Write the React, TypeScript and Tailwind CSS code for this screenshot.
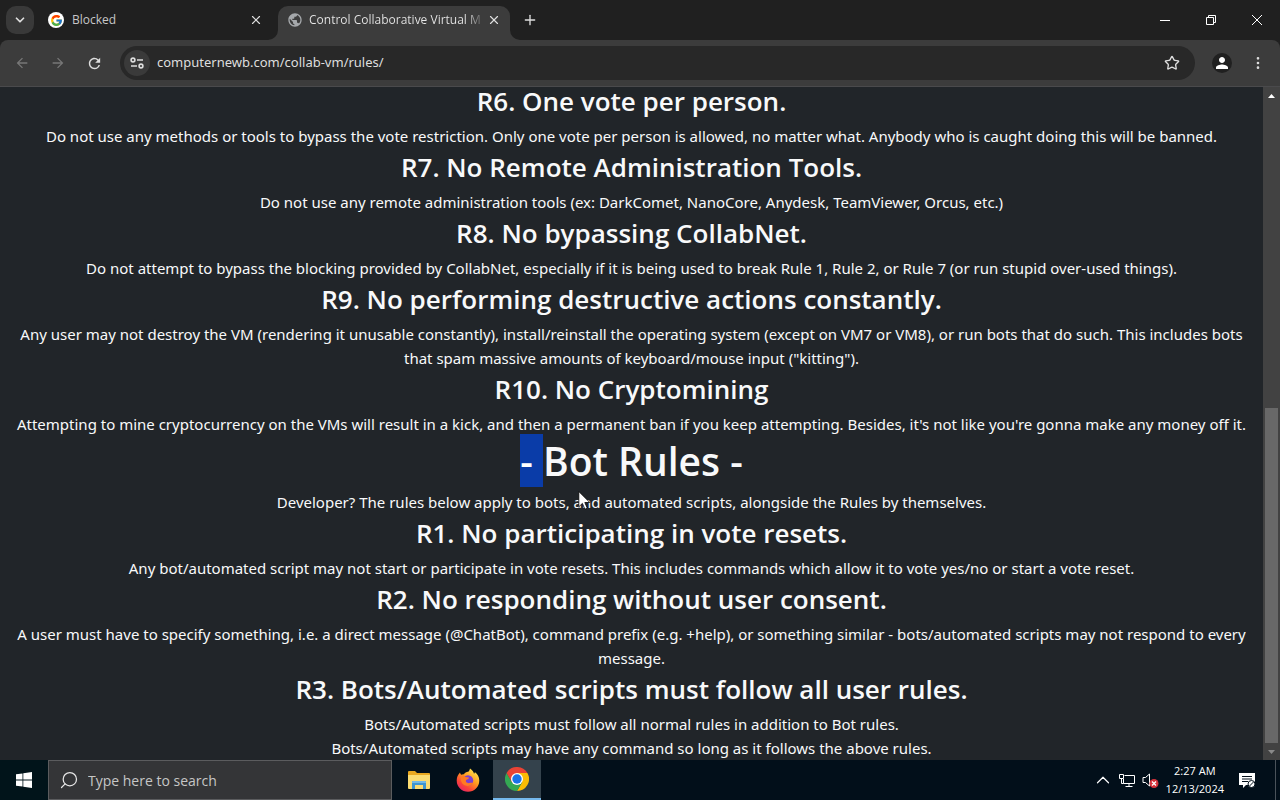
import type { ReactNode } from "react";
import {
  ChevronDown,
  ChevronUp,
  EllipsisVertical,
  Plus,
  Search,
  Star,
  X,
} from "lucide-react";
import { FcGoogle } from "react-icons/fc";
import {
  MdArrowBack,
  MdArrowForward,
  MdPerson,
  MdPublic,
  MdRefresh,
} from "react-icons/md";

interface Rule {
  title: string;
  body: ReactNode;
}

const userRules: Rule[] = [
  {
    title: "R6. One vote per person.",
    body: "Do not use any methods or tools to bypass the vote restriction. Only one vote per person is allowed, no matter what. Anybody who is caught doing this will be banned.",
  },
  {
    title: "R7. No Remote Administration Tools.",
    body: "Do not use any remote administration tools (ex: DarkComet, NanoCore, Anydesk, TeamViewer, Orcus, etc.)",
  },
  {
    title: "R8. No bypassing CollabNet.",
    body: "Do not attempt to bypass the blocking provided by CollabNet, especially if it is being used to break Rule 1, Rule 2, or Rule 7 (or run stupid over-used things).",
  },
  {
    title: "R9. No performing destructive actions constantly.",
    body: 'Any user may not destroy the VM (rendering it unusable constantly), install/reinstall the operating system (except on VM7 or VM8), or run bots that do such. This includes bots that spam massive amounts of keyboard/mouse input ("kitting").',
  },
  {
    title: "R10. No Cryptomining",
    body: "Attempting to mine cryptocurrency on the VMs will result in a kick, and then a permanent ban if you keep attempting. Besides, it's not like you're gonna make any money off it.",
  },
];

const botRules: Rule[] = [
  {
    title: "R1. No participating in vote resets.",
    body: "Any bot/automated script may not start or participate in vote resets. This includes commands which allow it to vote yes/no or start a vote reset.",
  },
  {
    title: "R2. No responding without user consent.",
    body: "A user must have to specify something, i.e. a direct message (@ChatBot), command prefix (e.g. +help), or something similar - bots/automated scripts may not respond to every message.",
  },
  {
    title: "R3. Bots/Automated scripts must follow all user rules.",
    body: (
      <>
        Bots/Automated scripts must follow all normal rules in addition to Bot
        rules.
        <br />
        Bots/Automated scripts may have any command so long as it follows the
        above rules.
      </>
    ),
  },
];

function RuleText({ children }: { children: ReactNode }) {
  return (
    <p className="pb-[5px] font-['Noto_Sans',sans-serif] text-[15px] leading-6">
      {children}
    </p>
  );
}

function RuleItem({ title, body }: Rule) {
  return (
    <section>
      <h3 className="mb-[9px] text-[26px] leading-7 font-semibold">{title}</h3>
      <RuleText>{body}</RuleText>
    </section>
  );
}

function TabStrip() {
  return (
    <div className="flex h-10 items-center bg-[#202020] text-[#dedede]">
      <button
        aria-label="Search tabs"
        className="ml-[6px] flex size-7 shrink-0 items-center justify-center rounded-[10px] bg-[#393939]"
      >
        <ChevronDown size={14} strokeWidth={3} />
      </button>

      <div className="ml-[14px] flex w-[220px] shrink-0 items-center">
        <span className="flex size-4 items-center justify-center rounded-full bg-white">
          <FcGoogle size={13} />
        </span>
        <span className="ml-2 flex-1 text-[12px] text-[#c7c7c7]">Blocked</span>
        <button aria-label="Close tab" className="mr-[5px]">
          <X size={14} strokeWidth={2} />
        </button>
      </div>

      {/* Active tab */}
      <div className="flex h-full shrink-0 items-end">
        <svg width="10" height="10" viewBox="0 0 10 10" className="fill-[#3c3c3c]">
          <path d="M10 0v10H0A10 10 0 0 0 10 0z" />
        </svg>
        <div className="flex h-[34px] w-[232px] items-center rounded-t-[10px] bg-[#3c3c3c] px-[9px] pb-[6px]">
          <MdPublic size={16} className="shrink-0 text-[#a5a8ab]" />
          <span className="ml-[6px] flex-1 bg-gradient-to-r from-[#e8e8e8] from-90% to-[#555] bg-clip-text text-[12px] whitespace-nowrap text-transparent">
            Control Collaborative Virtual M
          </span>
          <button aria-label="Close tab" className="ml-1 shrink-0">
            <X size={14} strokeWidth={2} />
          </button>
        </div>
        <svg width="10" height="10" viewBox="0 0 10 10" className="fill-[#3c3c3c]">
          <path d="M0 0v10h10A10 10 0 0 1 0 0z" />
        </svg>
      </div>
      <button aria-label="New tab" className="ml-[2px]">
        <Plus size={16} strokeWidth={2} />
      </button>

      <div className="ml-auto flex text-white">
        <button aria-label="Minimize" className="flex w-[46px] justify-center">
          <svg width="10" height="10" viewBox="0 0 10 10" stroke="currentColor">
            <path d="M0 5.5h10" />
          </svg>
        </button>
        <button aria-label="Restore" className="flex w-[46px] justify-center">
          <svg width="10" height="10" viewBox="0 0 10 10" fill="none" stroke="currentColor">
            <path d="M.5 2.5h7v7h-7zM2.5 2.5v-2h7v7h-2" />
          </svg>
        </button>
        <button aria-label="Close" className="flex w-[46px] justify-center">
          <svg width="10" height="10" viewBox="0 0 10 10" fill="none" stroke="currentColor">
            <path d="M0 0l10 10M10 0L0 10" />
          </svg>
        </button>
      </div>
    </div>
  );
}

function Toolbar() {
  return (
    <div className="bg-[#202020]">
      <div className="flex h-[47px] items-center rounded-t-lg border-b border-[#4a4a4c] bg-[#3c3c3c] text-[#dedede]">
        <div className="flex w-[120px] shrink-0 gap-5 pl-[14px]">
          <button aria-label="Back" className="text-[#777]">
            <MdArrowBack size={16} />
          </button>
          <button aria-label="Forward" className="text-[#777]">
            <MdArrowForward size={16} />
          </button>
          <button aria-label="Reload">
            <MdRefresh size={17} />
          </button>
        </div>

        <div className="flex h-[34px] flex-1 items-center rounded-full bg-[#282828] pr-[15px] pl-1">
          <button
            aria-label="View site information"
            className="flex size-[26px] items-center justify-center rounded-full bg-[#3a3a3a]"
          >
            <svg width="14" height="14" viewBox="0 0 14 14" fill="none" stroke="currentColor" strokeWidth="1.6">
              <circle cx="3" cy="4" r="1.9" />
              <path d="M7 4h6M1 10h6" />
              <circle cx="11" cy="10" r="1.9" />
            </svg>
          </button>
          <input
            aria-label="Address and search bar"
            defaultValue="computernewb.com/collab-vm/rules/"
            className="ml-[7px] min-w-0 flex-1 bg-transparent font-['Noto_Sans',sans-serif] text-[13px] text-[#dedede] outline-none"
          />
          <button aria-label="Bookmark this tab">
            <Star size={16} strokeWidth={2} />
          </button>
        </div>

        <button
          aria-label="Profile"
          className="ml-[17px] flex size-5 items-center justify-center rounded-full bg-[#202020] text-white"
        >
          <MdPerson size={18} />
        </button>
        <button aria-label="Menu" className="mr-[14px] ml-[18px]">
          <EllipsisVertical size={16} strokeWidth={2} />
        </button>
      </div>
    </div>
  );
}

function Scrollbar() {
  return (
    <div className="flex w-[17px] shrink-0 flex-col items-center bg-[#424242]">
      <svg width="17" height="17" viewBox="0 0 17 17" className="shrink-0 fill-white">
        <path d="M5 11l3.500-4 3.500 4z" />
      </svg>
      <div className="flex-[304]" />
      <div className="w-[13px] flex-[335] bg-[#686868]" />
      <svg width="17" height="17" viewBox="0 0 17 17" className="shrink-0 fill-[#8a8a8a]">
        <path d="M5 7l3.500 4 3.500-4z" />
      </svg>
    </div>
  );
}

function RulesPage() {
  return (
    <main className="relative min-w-0 flex-1 overflow-hidden bg-[#212529] px-3 text-center text-[#f8f9fa]">
      {userRules.map((rule) => (
        <RuleItem key={rule.title} {...rule} />
      ))}
      <h1 className="mb-[9px] text-[39px] leading-10 font-semibold">
        <mark className="bg-[#0a3ca8] whitespace-pre text-white">- </mark>
        Bot Rules -
      </h1>
      <RuleText>
        Developer? The rules below apply to bots, and automated scripts,
        alongside the Rules by themselves.
      </RuleText>
      {botRules.map((rule) => (
        <RuleItem key={rule.title} {...rule} />
      ))}

      {/* Mouse pointer */}
      <svg
        width="14"
        height="21"
        viewBox="0 0 14 21"
        className="absolute top-[403px] left-[578px] fill-white stroke-black"
      >
        <path d="M.8 1.500v15.300l3.600-3.400 2.500 5.800 2.400-1-2.500-5.700h5z" strokeWidth=".8" />
      </svg>
    </main>
  );
}

function FolderIcon() {
  return (
    <svg width="22" height="20" viewBox="0 0 22 20">
      <path d="M0 2a1 1 0 0 1 1-1h6l2 2h12a1 1 0 0 1 1 1v14H0z" fill="#e9a820" />
      <path d="M0 5h22v13a1 1 0 0 1-1 1H1a1 1 0 0 1-1-1z" fill="#fbdc72" />
      <path d="M4 19v-7a1 1 0 0 1 1-1h12a1 1 0 0 1 1 1v7h-3v-4H7v4z" fill="#3e95d1" />
      <path d="M4 12a1 1 0 0 1 1-1h12a1 1 0 0 1 1 1v1H4z" fill="#72b9e6" />
    </svg>
  );
}

function FirefoxIcon() {
  return (
    <svg width="24" height="24" viewBox="0 0 24 24">
      <defs>
        <linearGradient id="fox" x1="0.9" y1="0" x2="0.2" y2="1">
          <stop offset="0.1" stopColor="#ffe14b" />
          <stop offset="0.45" stopColor="#ff9a1f" />
          <stop offset="0.75" stopColor="#fb4438" />
          <stop offset="1" stopColor="#e3206c" />
        </linearGradient>
      </defs>
      <path
        d="M4 4.500c.2 1 .6 1.700 1.200 2.300C6 6.200 7 6 8 6.200 9 4.600 10.300 3.900 12 3.800c1-.3 1.500-1.500 2-3.300 2.300 1.600 3.600 3.400 4 5.200.7-.5.900-1 .8-1.700 2.900 2.200 4.500 5.200 4.500 8.500A11.300 11.300 0 0 1 .7 12.500C.7 9.300 2 6.500 4 4.500z"
        fill="url(#fox)"
      />
      <circle cx="12" cy="12.500" r="5.200" fill="#7a3fd1" />
      <path d="M5 8.500c2-1.200 3.500-.8 4.500.6l3.500.5c0 1.500-1.500 1.900-3 2.500-.7 2 1 3.500 3.500 3 1.500-.3 2.500-.6 3.500 0-1.500 3-5.500 3.800-8.500 2.200S4.300 12 5 8.500z" fill="#ff7a22" />
    </svg>
  );
}

function ChromeIcon() {
  return (
    <svg width="24" height="24" viewBox="0 0 24 24">
      <path d="M12 6h10.400A12 12 0 0 1 12 24l5.200-9z" fill="#fbbc04" />
      <path d="M1.600 6l5.200 9 5.200 3 5.200-3L12 24A12 12 0 0 1 1.600 6z" fill="#34a853" />
      <path d="M1.600 6A12 12 0 0 1 22.400 6H12l-5.200 9z" fill="#ea4335" />
      <circle cx="12" cy="12" r="6" fill="#fff" />
      <circle cx="12" cy="12" r="4.700" fill="#1a73e8" />
    </svg>
  );
}

function Taskbar() {
  return (
    <footer className="flex h-10 shrink-0 items-stretch bg-[#020f1a] text-white">
      <button aria-label="Start" className="flex w-12 items-center justify-center bg-[#01141a]">
        <svg width="16" height="16" viewBox="0 0 16 16" fill="currentColor">
          <path d="M0 2.300l6.500-.9v6.200H0zM7.300 1.300L16 0v7.600H7.300zM0 8.400h6.500v6.200L0 13.700zM7.300 8.400H16V16l-8.700-1.200z" />
        </svg>
      </button>
      <label className="flex w-[344px] items-center border border-[#5b5c5e] bg-[#343537] pl-[10px]">
        <Search size={20} strokeWidth={1.5} className="-scale-x-100 text-[#e6e6e6]" />
        <input
          aria-label="Type here to search"
          placeholder="Type here to search"
          className="ml-[9px] min-w-0 flex-1 bg-transparent text-[14px] outline-none placeholder:text-[#c6c6c6]"
        />
      </label>
      <button aria-label="File Explorer" className="ml-[3px] flex w-12 items-center justify-center">
        <FolderIcon />
      </button>
      <button aria-label="Firefox" className="ml-px flex w-12 items-center justify-center">
        <FirefoxIcon />
      </button>
      <button
        aria-label="Google Chrome"
        className="ml-px flex w-12 items-center justify-center border-b-2 border-[#76b9ed] bg-[#34424c]"
      >
        <ChromeIcon />
      </button>

      <div className="ml-auto flex items-center">
        <button aria-label="Show hidden icons">
          <ChevronUp size={22} strokeWidth={1.3} />
        </button>
        <button aria-label="Network" className="ml-[5px]">
          <svg width="17" height="16" viewBox="0 0 17 16" fill="none" stroke="currentColor">
            <path d="M5.500 3.500h10v8h-11V7M.5 2.500h4v4h-4zM2.500 6.500v5h2M10 11.500v3M6.500 14.500h7" />
          </svg>
        </button>
        <button aria-label="Volume muted" className="ml-[6px]">
          <svg width="18" height="18" viewBox="0 0 18 18" fill="none">
            <path d="M1 6.500h2.500L7.500 3v12l-4-3.500H1z" stroke="#fff" />
            <circle cx="12" cy="12.500" r="4.500" fill="#d3323a" />
            <path d="M10 10.500l4 4M14 10.500l-4 4" stroke="#fff" strokeWidth="1.300" />
          </svg>
        </button>
        <button className="ml-[6px] text-center text-[11px] leading-[18px]">
          2:27 AM
          <br />
          12/13/2024
        </button>
        <button aria-label="Notifications" className="ml-[15px]">
          <svg width="17" height="17" viewBox="0 0 17 17">
            <path d="M0 1h16v12H7l-3 3v-3H0z" fill="#fff" />
            <path d="M3 4.500h10M3 7h10M3 9.500h6" stroke="#020f1a" />
            <circle cx="12.500" cy="12" r="3.500" fill="#fff" stroke="#020f1a" />
            <path d="M10.500 14l4-4" stroke="#020f1a" />
          </svg>
        </button>
        <div className="mr-1 ml-[19px] h-10 w-px bg-[#4a525a]" />
      </div>
    </footer>
  );
}

export default function App() {
  return (
    <div className="flex h-screen flex-col overflow-hidden font-['Open_Sans',sans-serif]">
      <TabStrip />
      <Toolbar />
      <div className="flex min-h-0 flex-1">
        <RulesPage />
        <Scrollbar />
      </div>
      <Taskbar />
    </div>
  );
}
